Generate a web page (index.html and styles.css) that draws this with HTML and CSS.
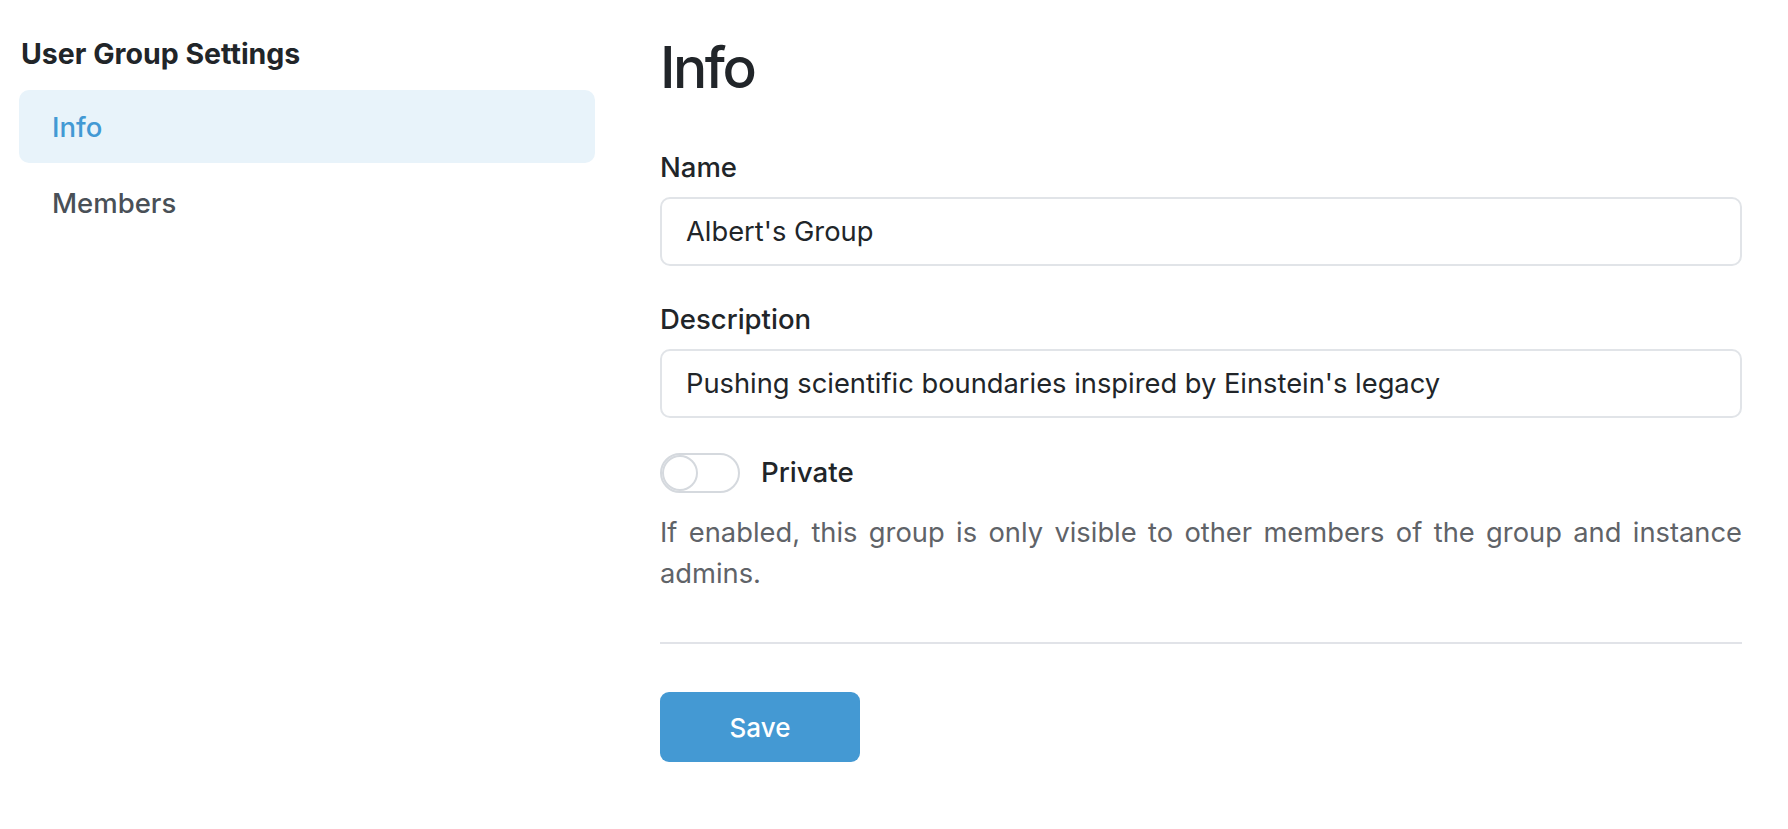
FILE: index.html
```html
<!DOCTYPE html>
<html lang="en">
<head>
<meta charset="utf-8">
<title>User Group Settings</title>
<link rel="stylesheet" href="styles.css">
</head>
<body>
<div class="page">
  <aside class="sidebar">
    <h2 class="sidebar-title">User Group Settings</h2>
    <nav class="nav">
      <a class="nav-item active" href="#">Info</a>
      <a class="nav-item" href="#">Members</a>
    </nav>
  </aside>
  <main class="main">
    <h1 class="title">Info</h1>
    <div class="field">
      <label class="label" for="name">Name</label>
      <input class="input" id="name" type="text" value="Albert's Group">
    </div>
    <div class="field">
      <label class="label" for="desc">Description</label>
      <input class="input" id="desc" type="text" value="Pushing scientific boundaries inspired by Einstein's legacy">
    </div>
    <div class="toggle-row">
      <span class="toggle"><span class="knob"></span></span>
      <span class="toggle-label">Private</span>
    </div>
    <p class="help">If enabled, this group is only visible to other members of the group and instance admins.</p>
    <hr class="divider">
    <button class="btn" type="button">Save</button>
  </main>
</div>
</body>
</html>
```

FILE: styles.css
```css
* { box-sizing: border-box; }
html, body { margin: 0; padding: 0; background: #fff; }
body {
  font-family: Inter, "Noto Sans", "Liberation Sans", sans-serif;
  color: #212529;
}
.page {
  display: flex;
  gap: 65px;
  padding: 0 46px 0 19px;
}
.sidebar {
  width: 576px;
  flex-shrink: 0;
  padding-top: 38px;
}
.sidebar-title {
  margin: 0 0 21px 2px;
  font-size: 28.5px;
  line-height: 31px;
  font-weight: 700;
  color: #212529;
}
.nav {
  display: flex;
  flex-direction: column;
  gap: 3px;
}
.nav-item {
  display: flex;
  align-items: center;
  height: 73px;
  padding: 0 33px;
  border-radius: 10px;
  font-size: 27.5px;
  font-weight: 500;
  color: #495057;
  text-decoration: none;
}
.nav-item.active {
  background: #e8f3fa;
  color: #4299d4;
}
.main {
  flex: 1;
  padding-top: 34px;
}
.title {
  margin: 0 0 51px;
  font-size: 57px;
  line-height: 67px;
  font-weight: 500;
  letter-spacing: -2.5px;
}
.field { margin-bottom: 38px; }
.field + .field { margin-bottom: 35px; }
.label {
  display: block;
  font-size: 27.5px;
  line-height: 30px;
  font-weight: 500;
  margin-bottom: 15px;
}
.input {
  display: block;
  width: 100%;
  height: 69px;
  padding: 0 24px;
  border: 2px solid #e1e4e8;
  border-radius: 10px;
  font-family: inherit;
  font-size: 27.3px;
  color: #212529;
  background: #fff;
  outline: none;
}
.toggle-row {
  display: flex;
  align-items: center;
  gap: 21px;
}
.toggle {
  position: relative;
  width: 80px;
  height: 40px;
  border: 2px solid #d5d9de;
  border-radius: 20px;
  background: #fff;
}
.knob {
  position: absolute;
  left: 0;
  top: 0;
  width: 36px;
  height: 36px;
  border: 2px solid #d5d9de;
  border-radius: 50%;
  background: #fff;
}
.toggle-label {
  font-size: 27.7px;
  line-height: 34px;
  font-weight: 500;
  margin-bottom: 2px;
}
.help {
  margin: 19px 0 0;
  font-size: 27.3px;
  line-height: 41px;
  color: #5f6368;
  text-align: justify;
}
.divider {
  margin: 48px 0 48px;
  border: 0;
  border-top: 2px solid #e1e3e8;
}
.btn {
  width: 200px;
  height: 70px;
  border: 0;
  border-radius: 9px;
  background: #4499d3;
  color: #fff;
  font-family: inherit;
  font-size: 26px;
  font-weight: 500;
}
```
